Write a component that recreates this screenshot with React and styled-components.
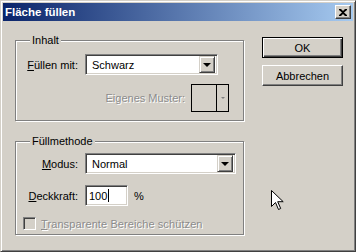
import React from 'react';
import styled, { createGlobalStyle, css } from 'styled-components';

const GlobalStyle = createGlobalStyle`
  html, body {
    margin: 0;
    padding: 0;
    background: #d4d0c8;
  }
  body {
    font-family: "Liberation Sans", Arial, sans-serif;
    font-size: 11px;
    color: #000;
  }
`;

const Window = styled.div`
  position: relative;
  width: 356px;
  height: 252px;
  box-sizing: border-box;
  border: 1px solid;
  border-color: #d4d0c8 #404040 #404040 #d4d0c8;
  box-shadow: inset 1px 1px 0 #fff, inset -1px -1px 0 #808080;
  padding: 2px;
  background: #d4d0c8;
  display: flex;
  flex-direction: column;
  overflow: hidden;
`;

const TitleBar = styled.div`
  height: 18px;
  display: flex;
  align-items: center;
  justify-content: space-between;
  padding: 0 2px 0 2px;
  background: linear-gradient(to right, #0a246a, #a6caf0);
  color: #fff;
  font-weight: bold;
  font-size: 11.5px;
`;

const Title = styled.span`
  line-height: 18px;
`;

const CloseButton = styled.div`
  width: 16px;
  height: 14px;
  box-sizing: border-box;
  border: 1px solid;
  border-color: #fff #404040 #404040 #fff;
  box-shadow: inset -1px -1px 0 #808080;
  background: #d4d0c8;
  display: flex;
  align-items: center;
  justify-content: center;
`;

const Body = styled.div`
  display: flex;
  align-items: flex-start;
  padding: 16px 10px 0 12px;
`;

const LeftCol = styled.div`
  width: 230px;
  margin-top: 3px;
`;

const RightCol = styled.div`
  margin-left: auto;
  display: flex;
  flex-direction: column;
  gap: 7px;
`;

const Group = styled.div`
  position: relative;
  width: 229px;
  box-sizing: border-box;
  border: 1px solid #808080;
  box-shadow: 1px 1px 0 #fff, inset 1px 1px 0 #fff;
  padding: ${p => p.$pad};
  & + & {
    margin-top: 20px;
  }
`;

const Legend = styled.span`
  position: absolute;
  top: -7px;
  left: 14px;
  padding: 0 2px;
  line-height: 13px;
  background: #d4d0c8;
`;

const Row = styled.div`
  display: flex;
  align-items: center;
  height: ${p => p.$h || 21}px;
  margin-top: ${p => p.$mt || 0}px;
  padding-left: ${p => p.$indent || 0}px;
  justify-content: ${p => (p.$end ? 'flex-end' : 'flex-start')};
`;

const disabledText = css`
  color: #8c8c8c;
  text-shadow: 1px 1px 0 #fff;
`;

const Label = styled.span`
  width: 53px;
  margin-right: 7px;
  text-align: right;
  white-space: nowrap;
  ${p => p.$disabled && css`
    width: auto;
    margin-right: 6px;
    ${disabledText};
  `}
`;

const Key = styled.span`
  text-decoration: underline;
  text-underline-offset: 1px;
`;

const Sunken = css`
  box-sizing: border-box;
  border: 1px solid;
  border-color: #808080 #fff #fff #808080;
  box-shadow: inset 1px 1px 0 #404040, inset -1px -1px 0 #d4d0c8;
`;

const Select = styled.div`
  ${Sunken};
  width: ${p => p.$w}px;
  height: 21px;
  padding: 2px;
  background: #fff;
  display: flex;
  align-items: center;
`;

const SelectValue = styled.span`
  flex: 1;
  padding-left: 4px;
`;

const ArrowButton = styled.div`
  width: 16px;
  height: 17px;
  box-sizing: border-box;
  border: 1px solid;
  border-color: #d4d0c8 #404040 #404040 #d4d0c8;
  box-shadow: inset 1px 1px 0 #fff, inset -1px -1px 0 #808080;
  background: #d4d0c8;
  display: flex;
  align-items: center;
  justify-content: center;
`;

const Triangle = styled.span`
  width: 0;
  height: 0;
  border-left: ${p => p.$size}px solid transparent;
  border-right: ${p => p.$size}px solid transparent;
  border-top: ${p => p.$size}px solid ${p => p.$color};
`;

const TextInput = styled.div`
  ${Sunken};
  width: 43px;
  height: 21px;
  padding: 0 0 0 3px;
  background: #fff;
  display: flex;
  align-items: center;
`;

const Caret = styled.span`
  width: 1px;
  height: 13px;
  background: #000;
  margin-left: 1px;
`;

const Unit = styled.span`
  margin-left: 6px;
`;

const Swatch = styled.div`
  width: 38px;
  height: 28px;
  box-sizing: border-box;
  border: 1px solid #000;
  display: flex;
  margin-right: 7px;
`;

const SwatchColor = styled.div`
  flex: 1;
  border-right: 1px solid #000;
`;

const SwatchArrow = styled.div`
  width: 11px;
  display: flex;
  align-items: center;
  justify-content: center;
`;

const Checkbox = styled.span`
  ${Sunken};
  width: 13px;
  height: 13px;
  background: #d4d0c8;
  margin-right: 5px;
`;

const CheckLabel = styled.span`
  ${disabledText};
  letter-spacing: 0.1px;
`;

const Button = styled.button`
  width: 81px;
  height: 21px;
  box-sizing: border-box;
  padding: 0;
  font: inherit;
  color: #000;
  background: #d4d0c8;
  border: 1px solid;
  border-color: #fff #404040 #404040 #fff;
  box-shadow: inset -1px -1px 0 #808080;
  ${p => p.$default && css`
    border-color: #000;
    box-shadow: inset 1px 1px 0 #fff, inset -1px -1px 0 #404040, inset -2px -2px 0 #808080;
  `}
`;

const Cursor = styled.svg`
  position: absolute;
  left: 270px;
  top: 189px;
`;

export default function App() {
  return (
    <>
      <GlobalStyle />
      <Window>
        <TitleBar>
          <Title>Fläche füllen</Title>
          <CloseButton>
            <svg width="8" height="7" viewBox="0 0 8 7">
              <path d="M0 0h2l2 2 2-2h2v1L5 3.5 8 6v1H6L4 5 2 7H0V6l3-2.5L0 1z" fill="#000" />
            </svg>
          </CloseButton>
        </TitleBar>
        <Body>
          <LeftCol>
            <Group $pad="13px 7px 8px 7px">
              <Legend>Inhalt</Legend>
              <Row $indent={2}>
                <Label><Key>F</Key>üllen mit:</Label>
                <Select $w={133}>
                  <SelectValue>Schwarz</SelectValue>
                  <ArrowButton><Triangle $size={4} $color="#000" /></ArrowButton>
                </Select>
              </Row>
              <Row $h={28} $mt={9} $end>
                <Label $disabled>Eigenes Muster:</Label>
                <Swatch>
                  <SwatchColor />
                  <SwatchArrow><Triangle $size={2} $color="#808080" /></SwatchArrow>
                </Swatch>
              </Row>
            </Group>
            <Group $pad="11px 7px 4px 7px">
              <Legend>Füllmethode</Legend>
              <Row $indent={2}>
                <Label><Key>M</Key>odus:</Label>
                <Select $w={151}>
                  <SelectValue>Normal</SelectValue>
                  <ArrowButton><Triangle $size={4} $color="#000" /></ArrowButton>
                </Select>
              </Row>
              <Row $indent={2} $mt={11}>
                <Label><Key>D</Key>eckkraft:</Label>
                <TextInput>100<Caret /></TextInput>
                <Unit>%</Unit>
              </Row>
              <Row $h={13} $mt={11}>
                <Checkbox />
                <CheckLabel><Key>T</Key>ransparente Bereiche schützen</CheckLabel>
              </Row>
            </Group>
          </LeftCol>
          <RightCol>
            <Button $default>OK</Button>
            <Button>Abbrechen</Button>
          </RightCol>
        </Body>
        <Cursor width="13" height="21" viewBox="0 0 13 21">
          <path d="M0.5 0.5v16l4-4 3 7 2.2-1-3-6.8h5.5z" fill="#fff" stroke="#000" strokeWidth="1" strokeLinejoin="miter" />
        </Cursor>
      </Window>
    </>
  );
}
